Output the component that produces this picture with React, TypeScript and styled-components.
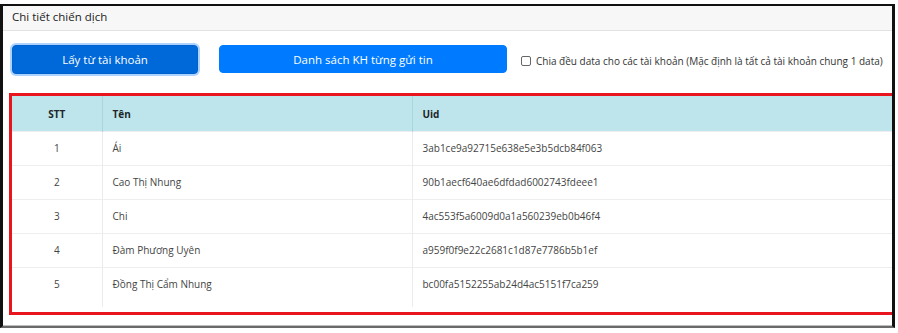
import React from "react";
import styled, { createGlobalStyle } from "styled-components";

const Global = createGlobalStyle`
  html, body { margin: 0; padding: 0; background: #fff; }
  body { font-family: "Open Sans", "Noto Sans", sans-serif; color: #212529; }
`;

const Frame = styled.div`
  margin-top: 4px;
  width: 895px;
  box-sizing: border-box;
  border-top: 2px solid #111;
  border-left: 3px solid #111;
  border-right: 3px solid #111;
  border-bottom: 2px solid #6a6a6a;
  overflow: hidden;
`;

const Card = styled.div`
  background: #fff;
  border-bottom: 1px solid #bdbdbd;
  padding-bottom: 10px;
`;

const CardHeader = styled.div`
  height: 25px;
  box-sizing: border-box;
  background: #f7f7f7;
  border-bottom: 1px solid #e2e2e2;
  display: flex;
  align-items: center;
  padding: 0 0 4px 9px;
  font-size: 11.5px;
  color: #222;
`;

const Toolbar = styled.div`
  display: flex;
  align-items: center;
  padding: 13px 0 0 9px;
  height: 30px;
`;

const Button = styled.button<{ $focused?: boolean; $w: number }>`
  width: ${(p) => p.$w}px;
  height: ${(p) => (p.$focused ? 29 : 28)}px;
  border-radius: 4px;
  border: 1px solid ${(p) => (p.$focused ? "#0062cc" : "#007bff")};
  background: ${(p) => (p.$focused ? "#0069d9" : "#007bff")};
  color: #fff;
  font-family: inherit;
  font-size: 11.5px;
  margin-right: ${(p) => (p.$focused ? 21 : 14)}px;
  box-shadow: ${(p) => (p.$focused ? "0 0 0 2px rgba(120,180,255,0.6)" : "none")};
  padding: 0;
  cursor: pointer;
`;

const CheckLabel = styled.label`
  display: flex;
  align-items: center;
  gap: 5px;
  font-size: 10px;
  white-space: nowrap;
  color: #333;
  margin-top: 4px;
`;

const Box = styled.span`
  flex: none;
  width: 8px;
  height: 8px;
  border: 1px solid #666;
  border-radius: 2px;
  background: #fff;
`;

const RedBox = styled.div`
  margin: 19px 0 0 6px;
  border: 3px solid #e8141e;
  border-right: none;
  padding-bottom: 5px;
`;

const Table = styled.table`
  width: 100%;
  border-collapse: collapse;
  font-size: 10px;
`;

const Th = styled.th<{ $center?: boolean; $w?: number }>`
  background: #bee5eb;
  height: 35px;
  padding: 2px 10px 0;
  text-align: ${(p) => (p.$center ? "center" : "left")};
  font-weight: 700;
  color: #212529;
  border-left: 1px solid #a9d6de;
  width: ${(p) => (p.$w ? `${p.$w}px` : "auto")};
  box-sizing: border-box;
  &:first-child { border-left: none; }
`;

const Td = styled.td<{ $center?: boolean }>`
  height: 33px;
  padding: 0 10px;
  text-align: ${(p) => (p.$center ? "center" : "left")};
  color: #444;
  border-left: 1px solid #e8ecef;
  border-top: 1px solid #eceef0;
  &:first-child { border-left: none; }
`;

const Filler = styled.td`
  height: 6px;
  padding: 0;
  border-left: 1px solid #e8ecef;
  &:first-child { border-left: none; }
`;

const rows = [
  ["1", "Ái", "3ab1ce9a92715e638e5e3b5dcb84f063"],
  ["2", "Cao Thị Nhung", "90b1aecf640ae6dfdad6002743fdeee1"],
  ["3", "Chi", "4ac553f5a6009d0a1a560239eb0b46f4"],
  ["4", "Đàm Phương Uyên", "a959f0f9e22c2681c1d87e7786b5b1ef"],
  ["5", "Đồng Thị Cẩm Nhung", "bc00fa5152255ab24d4ac5151f7ca259"],
];

export default function App() {
  return (
    <>
      <Global />
      <Frame>
        <Card>
          <CardHeader>Chi tiết chiến dịch</CardHeader>
          <Toolbar>
            <Button $focused $w={186}>Lấy từ tài khoản</Button>
            <Button $w={288}>Danh sách KH từng gửi tin</Button>
            <CheckLabel>
              <Box />
              Chia đều data cho các tài khoản (Mặc định là tất cả tài khoản chung 1 data)
            </CheckLabel>
          </Toolbar>
          <RedBox>
            <Table>
              <thead>
                <tr>
                  <Th $center $w={90}>STT</Th>
                  <Th $w={310}>Tên</Th>
                  <Th>Uid</Th>
                </tr>
              </thead>
              <tbody>
                {rows.map((r) => (
                  <tr key={r[0]}>
                    <Td $center>{r[0]}</Td>
                    <Td>{r[1]}</Td>
                    <Td>{r[2]}</Td>
                  </tr>
                ))}
                <tr>
                  <Filler />
                  <Filler />
                  <Filler />
                </tr>
              </tbody>
            </Table>
          </RedBox>
        </Card>
      </Frame>
    </>
  );
}
